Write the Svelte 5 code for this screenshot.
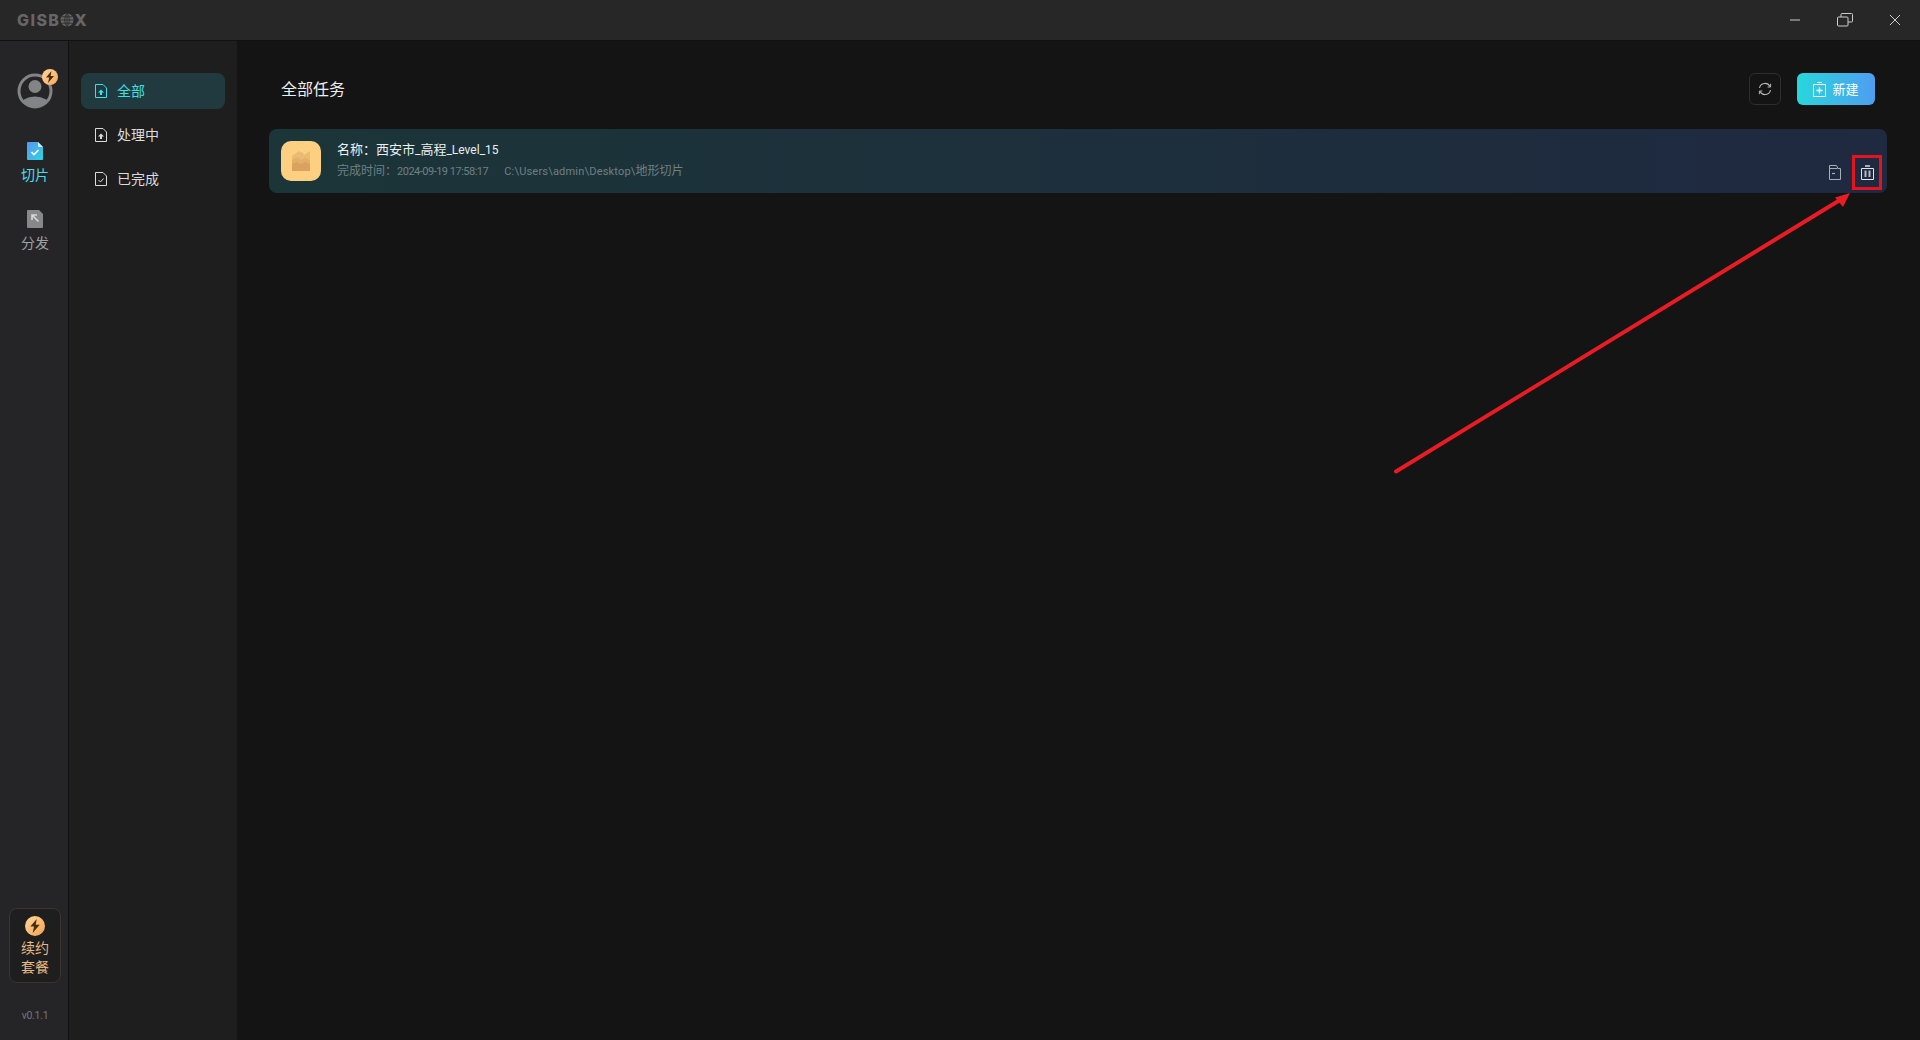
<script>
  const sideItems = [
    { label: '全部', active: true, kind: 'up' },
    { label: '处理中', active: false, kind: 'up' },
    { label: '已完成', active: false, kind: 'check' }
  ];
</script>

<div class="window">
  <header class="titlebar">
    <div class="logo">
      <span>GISB</span>
      <svg class="globe" viewBox="0 0 14 14" width="14" height="14" aria-hidden="true">
        <circle cx="7" cy="7" r="6.500" fill="#666"/>
        <path d="M.5 7h13M2 3.800h10M2 10.200h10M7 .5v13M7 .5C4 3 4 11 7 13.500M7 .5c3 2.500 3 10.500 0 13" fill="none" stroke="#272728" stroke-width=".8"/>
      </svg>
      <span>X</span>
    </div>
    <div class="win-controls">
      <svg width="12" height="12" viewBox="0 0 12 12"><path d="M1 6h10" stroke="#ccc" stroke-width="1"/></svg>
      <svg width="16" height="14" viewBox="0 0 16 14"><rect x=".5" y="4" width="10.500" height="9" rx="1" fill="none" stroke="#ccc"/><path d="M4 4V1.500a1 1 0 0 1 1-1h9.500a1 1 0 0 1 1 1V8a1 1 0 0 1-1 1H11" fill="none" stroke="#ccc"/></svg>
      <svg width="12" height="12" viewBox="0 0 12 12"><path d="M1 1l10 10M11 1L1 11" stroke="#ccc" stroke-width="1"/></svg>
    </div>
  </header>

  <div class="body">
    <aside class="rail">
      <div class="avatar">
        <svg width="36" height="36" viewBox="0 0 36 36">
          <defs><clipPath id="av"><circle cx="18" cy="18" r="15.500"/></clipPath></defs>
          <circle cx="18" cy="18" r="16" fill="none" stroke="#838487" stroke-width="3"/>
          <circle cx="18" cy="13.500" r="6.500" fill="#838487"/>
          <ellipse cx="18" cy="33" rx="15" ry="9.500" fill="#838487" clip-path="url(#av)"/>
        </svg>
        <span class="badge">
          <svg width="10" height="12" viewBox="0 0 10 12"><path d="M6.500 0L1 6.500h3.200L3 12l6-7H5.600z" fill="#4a2c0c"/></svg>
        </span>
      </div>

      <button class="rail-item active">
        <svg width="16" height="18" viewBox="0 0 16 18">
          <defs><linearGradient id="doc" x1="0" y1="0" x2="1" y2="1"><stop offset="0" stop-color="#5a95f5"/><stop offset="1" stop-color="#2bd6de"/></linearGradient></defs>
          <path d="M1 0h10l5 5v12a1 1 0 0 1-1 1H1a1 1 0 0 1-1-1V1a1 1 0 0 1 1-1z" fill="url(#doc)"/>
          <path d="M11 0l5 5h-4a1 1 0 0 1-1-1z" fill="#cdeefa"/>
          <path d="M4.500 10l2.500 2.500 4.500-4.500" fill="none" stroke="#fff" stroke-width="1.600"/>
        </svg>
        <span>切片</span>
      </button>
      <button class="rail-item">
        <svg width="16" height="18" viewBox="0 0 16 18">
          <path d="M1 0h11l4 4v13a1 1 0 0 1-1 1H1a1 1 0 0 1-1-1V1a1 1 0 0 1 1-1z" fill="#87888a"/>
          <path d="M5 10V5h5M5 5l6.500 6.500" fill="none" stroke="#d8d8d8" stroke-width="1.600"/>
        </svg>
        <span>分发</span>
      </button>

      <div class="spacer"></div>

      <button class="renew">
        <span class="renew-icon">
          <svg width="12" height="14" viewBox="0 0 10 12"><path d="M6.500 0L1 6.500h3.200L3 12l6-7H5.600z" fill="#4a2c0c"/></svg>
        </span>
        <span class="renew-text">续约<br/>套餐</span>
      </button>
      <div class="version">v0.1.1</div>
    </aside>

    <nav class="side">
      {#each sideItems as item}
        <button class="side-item" class:active={item.active}>
          <svg width="12" height="14" viewBox="0 0 12 14">
            <path d="M.5.500h7.500l3.500 3.500v9.500H.5z" fill="none" stroke="currentColor"/>
            {#if item.kind === 'up'}
              <path d="M6 5.500L3 8.500h2v2.500h2V8.500h2z" fill="currentColor"/>
            {:else}
              <path d="M3.500 8l2 2 3-3.500" fill="none" stroke="currentColor"/>
            {/if}
          </svg>
          <span>{item.label}</span>
        </button>
      {/each}
    </nav>

    <main class="main">
      <div class="head">
        <h1>全部任务</h1>
        <div class="actions">
          <button class="refresh" aria-label="刷新">
            <svg width="14" height="14" viewBox="0 0 14 14" fill="none" stroke="#b5b5b5" stroke-width="1.100">
              <path d="M1.500 6A5.600 5.600 0 0 1 12 4.500M12.500 8A5.600 5.600 0 0 1 2 9.500"/>
              <path d="M12.600 1.800V5H9.600" stroke-width="1"/>
              <path d="M1.400 12.200V9h3" stroke-width="1"/>
            </svg>
          </button>
          <button class="create">
            <svg width="13" height="15" viewBox="0 0 13 15" fill="none" stroke="#fff">
              <path d="M.5 2.500h12v12H.5zM4 .5h5"/>
              <path d="M6.500 5.500v6M3.500 8.500h6" stroke-width="1.400"/>
            </svg>
            <span>新建</span>
          </button>
        </div>
      </div>

      <section class="card">
        <div class="thumb">
          <svg width="18" height="20" viewBox="0 0 18 20">
            <path d="M0 5L7 0l4 2 1 2 6-4v20H0z" fill="#eabb72"/>
            <path d="M0 9l5-3 4 3 4-2 5 2v11H0z" fill="#e4b067"/>
            <path d="M0 13l5-2 4 2 4-2 5 2v7H0z" fill="#d9a35f"/>
          </svg>
        </div>
        <div class="info">
          <div class="name">名称：西安市<span class="latin">_</span>高程<span class="latin">_Level_15</span></div>
          <div class="meta">
            <span>完成时间：<span class="date">2024-09-19 17:58:17</span></span>
            <span><span class="path">C:\Users\admin\Desktop\</span>地形切片</span>
          </div>
        </div>
        <div class="card-actions">
          <button class="icon" aria-label="文件夹">
            <svg width="12" height="15" viewBox="0 0 12 15" fill="none" stroke="#a9adb6">
              <path d="M.5.500h7l1.500 3h2.500v11H.5zM.5 3.500h8"/>
              <path d="M3 8.500h3" stroke-width="1.200"/>
            </svg>
          </button>
          <button class="icon" aria-label="删除">
            <svg width="13" height="15" viewBox="0 0 13 15" fill="none">
              <path d="M4 1h5" stroke="#a9adb6" stroke-width="2"/>
              <path d="M.5 3.500h12v11H.5z" stroke="#e3e5ea"/>
              <path d="M4.500 5.500v6.500M8.500 5.500v6.500" stroke="#b4b8c2" stroke-width="2"/>
            </svg>
          </button>
        </div>
      </section>
    </main>
  </div>

  <svg class="annotation" width="1920" height="1040" viewBox="0 0 1920 1040" aria-hidden="true">
    <rect x="1853.500" y="156.500" width="27" height="32" fill="none" stroke="#e1141f" stroke-width="3"/>
    <path d="M1396 471.500L1840 200" stroke="#e81c24" stroke-width="4" stroke-linecap="round" fill="none"/>
    <path d="M1850 193L1835 197.500 1843 207z" fill="#e81c24"/>
  </svg>
</div>

<style>
  :global(body) {
    margin: 0;
    background: #141414;
  }
  .window {
    position: relative;
    width: 1920px;
    height: 1040px;
    overflow: hidden;
    display: flex;
    flex-direction: column;
    font-family: Roboto, "Noto Sans CJK SC", sans-serif;
    color: #e6e6e6;
  }
  button {
    font: inherit;
    color: inherit;
    background: none;
    border: 0;
    padding: 0;
  }
  .titlebar {
    height: 41px;
    flex: none;
    box-sizing: border-box;
    border-bottom: 1px solid #111;
    background: #272728;
    display: flex;
    align-items: center;
    justify-content: space-between;
    padding: 0 19px 0 17px;
  }
  .logo {
    display: flex;
    align-items: center;
    font-family: Inter, sans-serif;
    font-weight: 800;
    font-size: 16px;
    letter-spacing: 1.400px;
    color: #666;
  }
  .win-controls {
    display: flex;
    align-items: center;
    gap: 36px;
  }
  .win-controls svg {
    display: block;
  }
  .body {
    flex: 1;
    display: flex;
    min-height: 0;
  }
  .rail {
    width: 69px;
    box-sizing: border-box;
    flex: none;
    background: #252527;
    border-right: 1px solid #111;
    display: flex;
    flex-direction: column;
    align-items: center;
    padding: 32px 0 0 2px;
  }
  .avatar {
    position: relative;
    width: 36px;
    height: 36px;
    margin-bottom: 33px;
  }
  .avatar svg {
    display: block;
  }
  .badge {
    position: absolute;
    top: -4px;
    right: -5px;
    width: 16px;
    height: 16px;
    border-radius: 50%;
    background: linear-gradient(135deg, #ffd79a, #f7a95c);
    display: flex;
    align-items: center;
    justify-content: center;
  }
  .rail-item {
    display: flex;
    flex-direction: column;
    align-items: center;
    gap: 6px;
    font-size: 14px;
    line-height: 18px;
    color: #9fa1a5;
    margin-bottom: 26px;
  }
  .rail-item svg {
    display: block;
  }
  .rail-item.active {
    color: #48dfe9;
  }
  .spacer {
    flex: 1;
  }
  .renew {
    width: 52px;
    height: 75px;
    box-sizing: border-box;
    border: 1px solid #3a352f;
    border-radius: 8px;
    background: #1e1e1f;
    display: flex;
    flex-direction: column;
    align-items: center;
    padding-top: 7px;
    gap: 3px;
    margin-bottom: 26px;
    flex: none;
  }
  .renew-icon {
    width: 20px;
    height: 20px;
    border-radius: 50%;
    background: linear-gradient(135deg, #ffd79a, #f3a253);
    display: flex;
    align-items: center;
    justify-content: center;
  }
  .renew-text {
    font-size: 14px;
    line-height: 19px;
    color: #e8b985;
    text-align: center;
  }
  .version {
    font-size: 10.500px;
    line-height: 13px;
    letter-spacing: -.3px;
    color: #6f7885;
    margin-bottom: 18px;
  }
  .side {
    width: 168px;
    flex: none;
    background: #1e1e1f;
    padding: 32px 12px 0 12px;
    box-sizing: border-box;
    display: flex;
    flex-direction: column;
    gap: 8px;
  }
  .side-item {
    height: 36px;
    border-radius: 8px;
    display: flex;
    align-items: center;
    gap: 10px;
    padding-left: 14px;
    font-size: 14px;
    color: #dcdcdc;
    text-align: left;
  }
  .side-item svg {
    flex: none;
  }
  .side-item span {
    margin-bottom: 2px;
  }
  .side-item.active {
    background: #213a40;
    color: #3fdfe6;
  }
  .main {
    flex: 1;
    min-width: 0;
    background: #141414;
    padding: 32px 33px 0 32px;
    box-sizing: border-box;
  }
  .head {
    height: 32px;
    display: flex;
    align-items: center;
    justify-content: space-between;
    padding: 0 12px;
    margin-bottom: 24px;
  }
  h1 {
    margin: 0 0 2px;
    font-size: 16px;
    font-weight: 400;
    color: #eee;
  }
  .actions {
    display: flex;
    align-items: center;
    gap: 16px;
  }
  .refresh {
    width: 32px;
    height: 32px;
    box-sizing: border-box;
    border: 1px solid #2e2e2e;
    border-radius: 6px;
    display: flex;
    align-items: center;
    justify-content: center;
  }
  .create {
    width: 78px;
    height: 32px;
    border-radius: 6px;
    background: linear-gradient(90deg, #28d6dc, #4f9df0);
    color: #fff;
    display: flex;
    align-items: center;
    justify-content: center;
    gap: 6px;
    font-size: 13px;
  }
  .create span {
    margin-bottom: 2px;
  }
  .card {
    position: relative;
    height: 64px;
    box-sizing: border-box;
    border-radius: 8px;
    background: linear-gradient(90deg, #1b3538, #1f2940);
    display: flex;
    align-items: center;
    padding: 0 12px;
    gap: 16px;
  }
  .thumb {
    width: 40px;
    height: 40px;
    border-radius: 10px;
    background: #fdcf80;
    display: flex;
    align-items: center;
    justify-content: center;
  }
  .info {
    display: flex;
    flex-direction: column;
    gap: 4px;
    margin-top: -2px;
  }
  .name {
    font-size: 13px;
    line-height: 18px;
    color: #eceff1;
  }
  .latin {
    font-size: 12px;
  }
  .meta {
    font-size: 12px;
    line-height: 16px;
    color: #6f8083;
    display: flex;
    gap: 16px;
  }
  .date {
    font-size: 11px;
    letter-spacing: -.5px;
  }
  .path {
    font-size: 11px;
    letter-spacing: .2px;
  }
  .card-actions {
    position: absolute;
    right: 9px;
    bottom: 10px;
    display: flex;
    align-items: center;
    gap: 10px;
  }
  .icon {
    width: 22px;
    height: 21px;
    display: flex;
    align-items: center;
    justify-content: center;
  }
  .annotation {
    position: absolute;
    left: 0;
    top: 0;
    pointer-events: none;
  }
</style>
